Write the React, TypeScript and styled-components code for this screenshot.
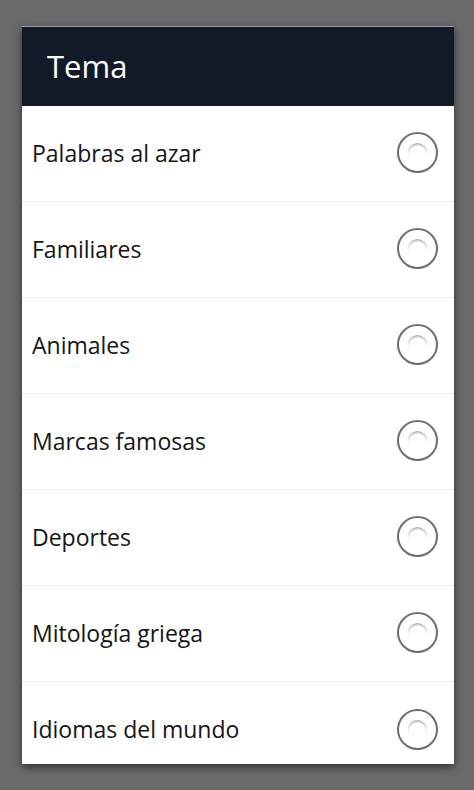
import styled, { createGlobalStyle } from "styled-components";

const topics = [
    "Palabras al azar",
    "Familiares",
    "Animales",
    "Marcas famosas",
    "Deportes",
    "Mitología griega",
    "Idiomas del mundo",
];

const App = () => {
    return (
        <>
            <GlobalStyle/>
            <Screen>
                <Dialog>
                    <Header>
                        <TitleText>Tema</TitleText>
                    </Header>
                    <List>
                        {topics.map((t, i) => (
                            <Row key={t} last={i === topics.length - 1}>
                                <RowLabel>{t}</RowLabel>
                                <Radio>
                                    <RadioInner/>
                                </Radio>
                            </Row>
                        ))}
                    </List>
                </Dialog>
            </Screen>
        </>
    );
}

export default App;

const GlobalStyle = createGlobalStyle`
    html, body {
        margin: 0;
        padding: 0;
        background: #6a6a6a;
    }
    * {
        box-sizing: border-box;
    }
`

const Screen = styled.div`
    width: 474px;
    height: 790px;
    padding: 26px 20px 0 22px;
    background: #6a6a6a;
    overflow: hidden;
`

const Dialog = styled.div`
    display: flex;
    flex-direction: column;
    width: 432px;
    height: 738px;
    overflow: hidden;
    background: #fff;
    box-shadow: 0 3px 8px rgba(0, 0, 0, 0.55);
    border-top: 1px solid #9a9ea4;
`

const Header = styled.div`
    display: flex;
    align-items: center;
    height: 79px;
    padding-left: 25px;
    background: #131a27;
    flex-shrink: 0;
`

const TitleText = styled.div`
    color: #fff;
    font-family: "Open Sans", "Noto Sans", sans-serif;
    font-size: 31px;
    font-weight: 400;
    padding-bottom: 2px;
`

const List = styled.div`
    display: flex;
    flex-direction: column;
`

const Row = styled.div<{ last?: boolean }>`
    display: flex;
    align-items: center;
    justify-content: space-between;
    height: 96px;
    flex-shrink: 0;
    padding: 0 16px 2px 10px;
    border-bottom: ${p => p.last ? "none" : "1px solid #ececec"};
`

const RowLabel = styled.div`
    color: #151515;
    font-family: "Open Sans", "Noto Sans", sans-serif;
    font-size: 23px;
    font-weight: 400;
`

const Radio = styled.div`
    display: flex;
    align-items: center;
    justify-content: center;
    width: 41px;
    height: 41px;
    border-radius: 50%;
    border: 2px solid #6e6e6e;
    background: #fff;
`

const RadioInner = styled.div`
    width: 19px;
    height: 19px;
    border-radius: 50%;
    background: radial-gradient(circle at 50% 60%, #fff 45%, #fff 55%, transparent 70%),
        linear-gradient(to bottom, #b4b4b4, #f2f2f2);
`
